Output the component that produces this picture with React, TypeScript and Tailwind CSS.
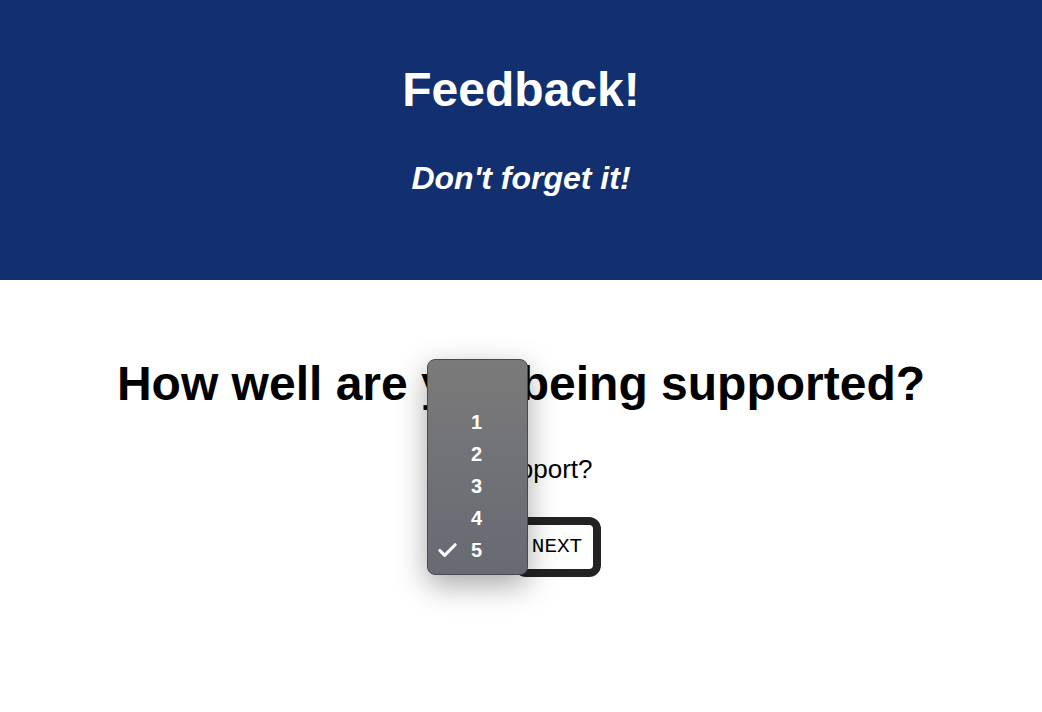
import { Check } from "lucide-react";

const options = ["", "1", "2", "3", "4", "5"];

function OptionPopup() {
  return (
    <div className="absolute left-[427px] top-[359px] w-[101px] rounded-[8px] border border-[#4a4a4e] bg-gradient-to-b from-[#7a7a7a] to-[#686a72] pt-[14px] pb-[8px] shadow-[0_10px_30px_rgba(0,0,0,0.35)]">
      {options.map((o, i) => (
        <div key={i} className="relative flex h-[32px] items-center pl-[43px] text-[20px] font-bold text-white">
          {o === "5" && (
            <Check className="absolute left-[8px] h-[23px] w-[23px]" strokeWidth={3.2} />
          )}
          {o}
        </div>
      ))}
    </div>
  );
}

export default function App() {
  return (
    <div className="relative min-h-[712px] bg-white font-['Liberation_Sans',Arial,sans-serif] text-black">
      <header className="flex h-[280px] flex-col items-center bg-[#12306f] pt-[63px] text-white">
        <h1 className="text-[48px] font-bold leading-[54px]">Feedback!</h1>
        <p className="mt-[43px] text-[32px] font-bold italic leading-[36px]">Don't forget it!</p>
      </header>

      <main className="flex flex-col items-center pt-[77px]">
        <h2 className="text-[48px] font-bold leading-[54px]">How well are you being supported?</h2>
        <p className="mt-[42px] text-[26px] leading-[32px]">My support?</p>
        <div className="mt-[32px] flex items-center gap-[4px]">
          <select
            defaultValue="5"
            className="h-[24px] w-[68px] rounded border border-gray-400 bg-white px-1 text-[14px]"
          >
            {options.map((o, i) => (
              <option key={i} value={o}>
                {o}
              </option>
            ))}
          </select>
          <button className="h-[60px] w-[87px] rounded-[12px] border-[8px] border-[#222] bg-white font-mono text-[21px] text-black">
            NEXT
          </button>
        </div>
      </main>

      <OptionPopup />
    </div>
  );
}
